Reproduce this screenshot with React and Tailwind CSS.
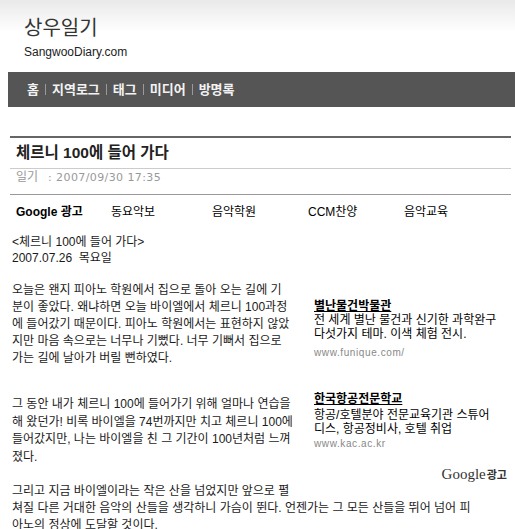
import React from "react";

const navItems = ["홈", "지역로그", "태그", "미디어", "방명록"];

const adLinks = [
  { label: "동요악보", w: "w-[101px]" },
  { label: "음악학원", w: "w-[96px]" },
  { label: "CCM찬양", w: "w-[96px]" },
  { label: "음악교육", w: "" },
];

const AdBox = () => (
  <div className="float-right w-[197px] -ml-[12px] pt-[17px] pb-[8px] text-black">
    <div className="leading-[14px]">
      <span className="font-bold underline">별난물건박물관</span>
    </div>
    <div className="leading-[14px]">
      전 세계 별난 물건과 신기한 과학완구
      <br />
      다섯가지 테마. 이색 체험 전시.
    </div>
    <div className="mt-[5px] leading-[14px] text-[10px] text-[#888] tracking-[0.6px]">
      www.funique.com/
    </div>

    <div className="mt-[32px] leading-[14px]">
      <span className="font-bold underline">한국항공전문학교</span>
    </div>
    <div className="mt-[2px] leading-[14px]">
      항공/호텔분야 전문교육기관 스튜어
      <br />
      디스, 항공정비사, 호텔 취업
    </div>
    <div className="mt-[1px] leading-[14px] text-[10px] text-[#888] tracking-[0.6px]">
      www.kac.ac.kr
    </div>

    <div className="mt-[15px] leading-[16px] flex justify-end items-baseline pr-[4px]">
      <span className="font-['Liberation_Serif',serif] text-[15px] text-[#333]">Google</span>
      <span className="ml-[1px] text-[11px] font-bold text-[#333]">광고</span>
    </div>
  </div>
);

export default function App() {
  return (
    <div className="w-full min-h-[529px] bg-white font-['Liberation_Sans','Noto_Sans_CJK_KR',sans-serif] text-[#222]">
      {/* header */}
      <div className="h-[72px] pt-[16px] pl-[24px] bg-linear-to-b from-[#e9e9e9] via-[#f8f8f8] via-30% to-white to-45%">
        <div className="text-[20px] leading-[24px] text-[#333]">상우일기</div>
        <div className="mt-[4px] text-[12px] leading-[16px] text-[#222]">SangwooDiary.com</div>
      </div>

      {/* nav */}
      <div className="ml-[8px] h-[35px] bg-[#555] flex items-center pl-[19px] text-[13px] font-bold text-[#f2f2f2]">
        {navItems.map((item, i) => (
          <React.Fragment key={item}>
            {i > 0 && <span className="mx-[6px] w-px h-[11px] bg-[#9a9a9a]" />}
            <span className="leading-[16px]">{item}</span>
          </React.Fragment>
        ))}
      </div>

      {/* post */}
      <div className="ml-[10px] mr-[4px] mt-[29px] border-t-2 border-[#666]">
        <div className="px-[6px] pt-[5px] pb-[5px] leading-[20px] text-[15.5px] font-bold text-[#222] border-b border-[#ccc]">
          체르니 100에 들어 가다
        </div>
        <div className="px-[6px] pb-[8px] leading-[16px] text-[12px] text-[#999] border-b border-[#999] flex items-baseline">
          <span>일기</span>
          <span className="ml-[10px] font-['DejaVu_Sans',sans-serif] text-[11px] tracking-[0.4px]">: 2007/09/30 17:35</span>
        </div>

        <div className="px-[6px] pt-[9px] flex leading-[16px] text-[12px] text-black">
          <span className="w-[95px] font-bold">Google 광고</span>
          {adLinks.map((l) => (
            <span key={l.label} className={l.w}>
              {l.label}
            </span>
          ))}
        </div>

        {/* body */}
        <div className="mt-[14px] pl-[2px] text-[12px] text-[#1a1a1a] whitespace-nowrap">
          <div className="leading-[16px]">
            &lt;체르니 100에 들어 가다&gt;
            <br />
            2007.07.26&nbsp; 목요일
          </div>

          <div className="mt-[16px] leading-[17px]">
            <AdBox />
            오늘은 왠지 피아노 학원에서 집으로 돌아 오는 길에 기
            <br />
            분이 좋았다. 왜냐하면 오늘 바이엘에서 체르니 100과정
            <br />
            에 들어갔기 때문이다. 피아노 학원에서는 표현하지 않았
            <br />
            지만 마음 속으로는 너무나 기뻤다. 너무 기뻐서 집으로
            <br />
            가는 길에 날아가 버릴 뻔하였다.
          </div>

          <div className="mt-[29px] leading-[17.6px]">
            그 동안 내가 체르니 100에 들어가기 위해 얼마나 연습을
            <br />
            해 왔던가! 비록 바이엘을 74번까지만 치고 체르니 100에
            <br />
            들어갔지만, 나는 바이엘을 친 그 기간이 100년처럼 느껴
            <br />
            졌다.
          </div>

          <div className="mt-[17px] leading-[17px]">
            그리고 지금 바이엘이라는 작은 산을 넘었지만 앞으로 펼
            <br />
            쳐질 다른 거대한 음악의 산들을 생각하니 가슴이 뛴다. 언젠가는 그 모든 산들을 뛰어 넘어 피
            <br />
            아노의 정상에 도달할 것이다.
          </div>
        </div>
      </div>
    </div>
  );
}
